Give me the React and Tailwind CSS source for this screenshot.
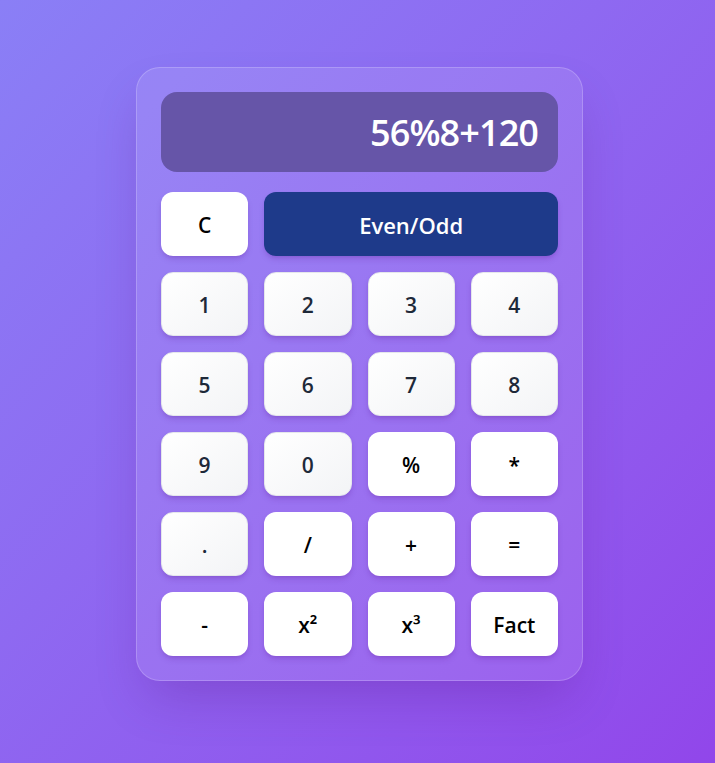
const numberKeys = ['1', '2', '3', '4', '5', '6', '7', '8', '9', '0'];

const keys = [
  '1', '2', '3', '4',
  '5', '6', '7', '8',
  '9', '0', '%', '*',
  '.', '/', '+', '=',
  '-', 'x²', 'x³', 'Fact',
];

function Key({ label }) {
  const isNum = numberKeys.includes(label) || label === '.';
  return (
    <button
      className={
        isNum
          ? 'h-16 pt-[3px] rounded-xl bg-gradient-to-br from-white to-gray-100 border border-gray-200 text-gray-800 text-[21px] font-semibold shadow-md shadow-purple-900/20'
          : 'h-16 pt-[3px] rounded-xl bg-white text-black text-[21px] font-semibold shadow-md shadow-purple-900/20'
      }
    >
      {label}
    </button>
  );
}

export default function App() {
  return (
    <div
      className="min-h-screen w-full bg-gradient-to-br from-[#8a7ff6] to-[#9146ea] flex justify-center pt-[67px] pl-[4px]"
      style={{ fontFamily: '"Open Sans", "Noto Sans", sans-serif' }}
    >
      <div className="w-[447px] h-fit rounded-3xl border border-white/20 bg-white/10 p-6 shadow-2xl shadow-purple-900/30 flex flex-col gap-5">
        <div className="h-20 rounded-2xl bg-[#6655a8] flex items-center justify-end pr-5">
          <span className="text-4xl font-semibold text-white tracking-tight pt-[2px]">56%8+120</span>
        </div>
        <div className="grid grid-cols-4 gap-4">
          <button className="h-16 pt-[3px] rounded-xl bg-white text-black text-[21px] font-semibold shadow-md shadow-purple-900/20">C</button>
          <button className="col-span-3 h-16 pt-[3px] rounded-xl bg-[#1e3a8a] text-white text-[22px] font-semibold shadow-md shadow-purple-900/20">Even/Odd</button>
          {keys.map((k) => (
            <Key key={k} label={k} />
          ))}
        </div>
      </div>
    </div>
  );
}
